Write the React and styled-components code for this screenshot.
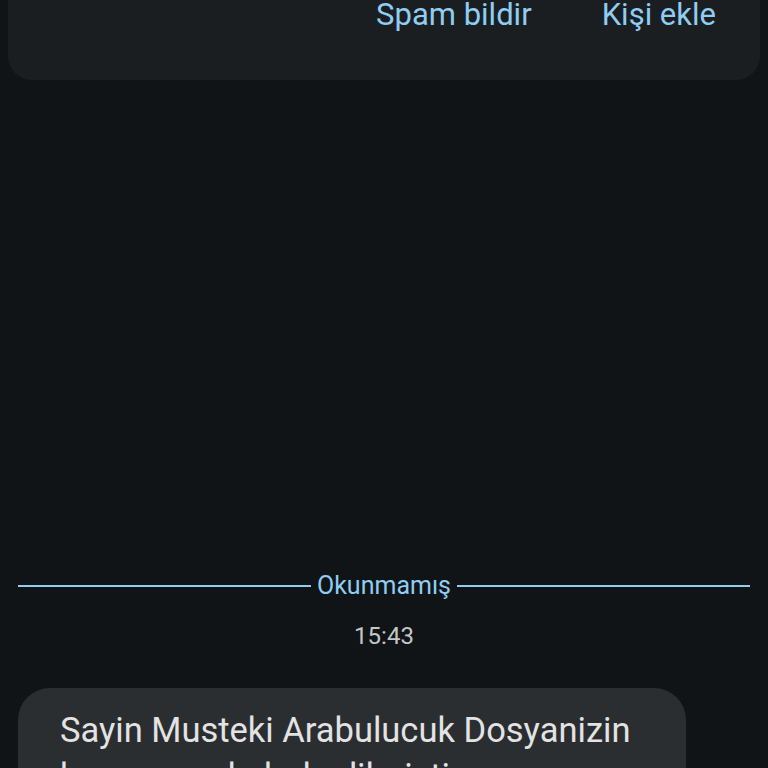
import React from 'react';
import styled, { createGlobalStyle } from 'styled-components';

const GlobalStyle = createGlobalStyle`
  html, body {
    margin: 0;
    padding: 0;
    background: #111417;
    overflow: hidden;
  }

  body {
    font-family: Roboto, "Noto Sans", "Liberation Sans", sans-serif;
  }
`;

const Screen = styled.div`
  width: 768px;
  height: 768px;
  display: flex;
  flex-direction: column;
  overflow: hidden;

  & > * {
    flex-shrink: 0;
  }
`;

const SenderCard = styled.div`
  margin: 0 8px;
  height: 80px;
  background: #1b1e21;
  border-radius: 0 0 24px 24px;
  display: flex;
  justify-content: flex-end;
  align-items: flex-start;
  padding-right: 44px;
  gap: 70px;
`;

const ActionButton = styled.button`
  background: none;
  border: 0;
  padding: 0;
  margin-top: -3px;
  font-family: inherit;
  font-size: 31px;
  line-height: 36px;
  color: #8fcdf2;
  cursor: pointer;
`;

const Divider = styled.div`
  margin-top: 490px;
  padding: 0 18px;
  display: flex;
  align-items: center;
  gap: 6px;
  height: 32px;
`;

const DividerLine = styled.span`
  flex: 1;
  height: 2px;
  background: #8fcdf2;
`;

const DividerLabel = styled.span`
  font-size: 25px;
  line-height: 32px;
  color: #8fcdf2;
`;

const Timestamp = styled.div`
  margin-top: 19px;
  text-align: center;
  font-size: 24px;
  line-height: 30px;
  color: #c4c7c5;
`;

const Bubble = styled.div`
  margin: 37px 0 0 18px;
  width: 668px;
  box-sizing: border-box;
  padding: 19px 36px 20px 42px;
  background: #2b2e31;
  border-radius: 32px;
  font-size: 34.5px;
  line-height: 46px;
  color: #e3e3e3;
`;

export default function App() {
  return (
    <>
      <GlobalStyle />
      <Screen>
        <SenderCard>
          <ActionButton>Spam bildir</ActionButton>
          <ActionButton>Kişi ekle</ActionButton>
        </SenderCard>
        <Divider>
          <DividerLine />
          <DividerLabel>Okunmamış</DividerLabel>
          <DividerLine />
        </Divider>
        <Timestamp>15:43</Timestamp>
        <Bubble>
          Sayin Musteki Arabulucuk Dosyanizin basvurusu kabul edilmistir.
        </Bubble>
      </Screen>
    </>
  );
}
